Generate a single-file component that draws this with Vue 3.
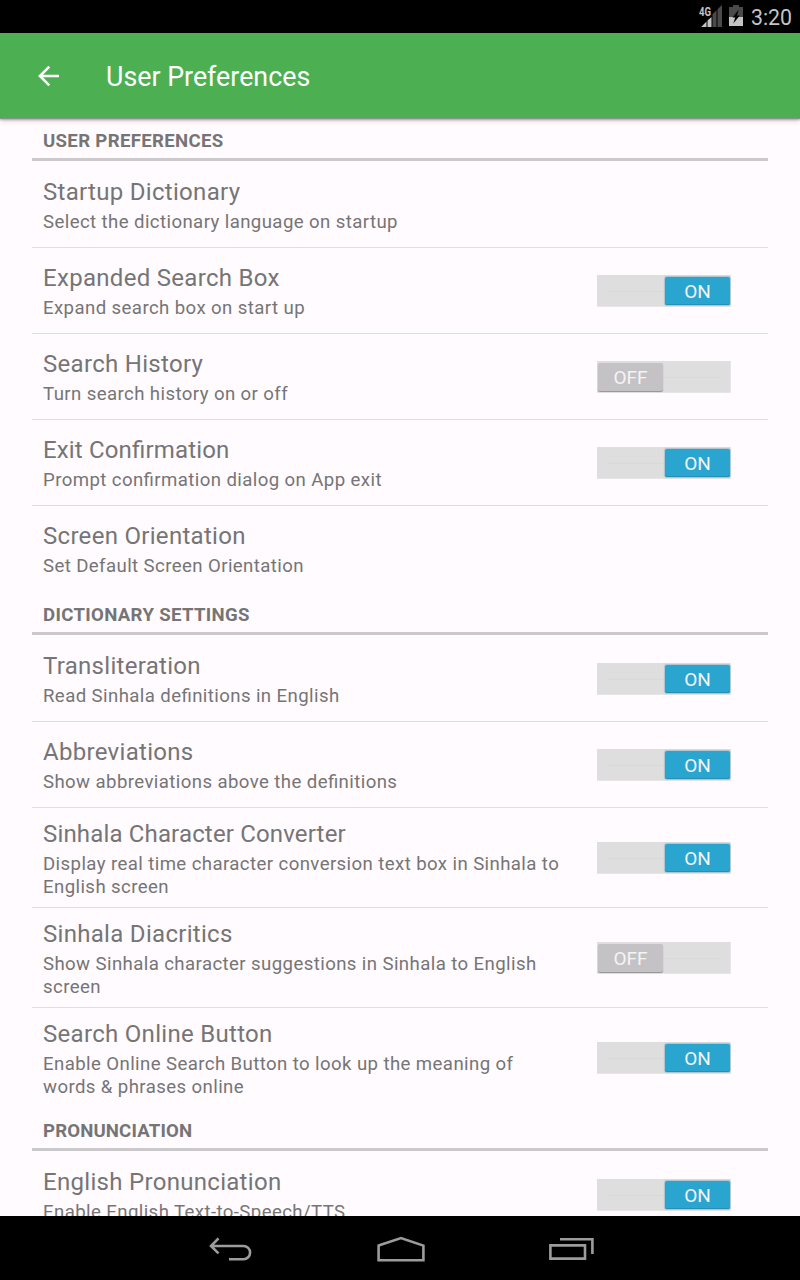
<script setup>
const sections = [
  {
    title: 'USER PREFERENCES',
    rows: [
      { title: 'Startup Dictionary', lines: ['Select the dictionary language on startup'] },
      { title: 'Expanded Search Box', lines: ['Expand search box on start up'], state: 'ON' },
      { title: 'Search History', lines: ['Turn search history on or off'], state: 'OFF' },
      { title: 'Exit Confirmation', lines: ['Prompt confirmation dialog on App exit'], state: 'ON' },
      { title: 'Screen Orientation', lines: ['Set Default Screen Orientation'] },
    ],
  },
  {
    title: 'DICTIONARY SETTINGS',
    rows: [
      { title: 'Transliteration', lines: ['Read Sinhala definitions in English'], state: 'ON' },
      { title: 'Abbreviations', lines: ['Show abbreviations above the definitions'], state: 'ON' },
      { title: 'Sinhala Character Converter', lines: ['Display real time character conversion text box in Sinhala to', 'English screen'], state: 'ON' },
      { title: 'Sinhala Diacritics', lines: ['Show Sinhala character suggestions in Sinhala to English', 'screen'], state: 'OFF' },
      { title: 'Search Online Button', lines: ['Enable Online Search Button to look up the meaning of', 'words & phrases online'], state: 'ON' },
    ],
  },
  {
    title: 'PRONUNCIATION',
    rows: [
      { title: 'English Pronunciation', lines: ['Enable English Text-to-Speech/TTS'], state: 'ON' },
    ],
  },
]
</script>

<template>
  <div class="screen">
    <div class="status">
      <svg class="signal" width="24" height="24" viewBox="0 0 24 24">
        <path d="M23 0V22H18.5V4.3ZM17.5 5.3V22H13.5V9.3Z" fill="#4a4a4a" />
        <path d="M12.5 12V22H8.5V15.5ZM7.5 16.5V22H2.2Z" fill="#c4c4c4" />
        <text x="0" y="11" font-size="13" font-weight="700" textLength="12" lengthAdjust="spacingAndGlyphs" fill="#c4c4c4">4G</text>
      </svg>
      <svg class="battery" width="14" height="22" viewBox="0 0 14 22">
        <path d="M4 0H10V2H14V12H0V2H4Z" fill="#4a4a4a" />
        <path d="M0 12H14V21H0Z" fill="#c4c4c4" />
        <path d="M9.8 4.5L3.5 12.5H6.2L4.3 18.5L10.8 10.6H8Z" fill="#000" />
      </svg>
      <span class="clock">3:20</span>
    </div>

    <header class="toolbar">
      <svg class="back" width="22" height="22" viewBox="0 0 22 22" fill="none" stroke="#fff" stroke-width="2.6">
        <path d="M21 11H2.5M11.3 1.6L1.9 11L11.3 20.4" />
      </svg>
      <h1>User Preferences</h1>
    </header>

    <main class="list">
      <section v-for="s in sections" :key="s.title">
        <h2><span>{{ s.title }}</span></h2>
        <div v-for="r in s.rows" :key="r.title" class="row" :class="{ tall: r.lines.length > 1 }">
          <div class="text">
            <div class="title" :class="{ tight: r.title.includes('Con') }"><span>{{ r.title }}</span></div>
            <div v-for="l in r.lines" :key="l" class="summary"><span>{{ l }}</span></div>
          </div>
          <div v-if="r.state" class="switch" :class="r.state.toLowerCase()">
            <div class="thumb">{{ r.state }}</div>
          </div>
        </div>
      </section>
    </main>

    <nav class="navbar">
      <svg width="44" height="24" viewBox="0 0 44 24" fill="none" stroke="#9c9c9c" stroke-width="2.6">
        <path d="M2 9H34.5A6.6 6.6 0 0 1 34.5 22.2H20M9.5 1.3L2 9L9.5 16.4" />
      </svg>
      <svg width="48" height="26" viewBox="0 0 48 26" fill="none" stroke="#9c9c9c" stroke-width="2.6">
        <path d="M1.6 9.6L24 2L46.4 9.6V24.2H1.6Z" />
      </svg>
      <svg width="46" height="24" viewBox="0 0 46 24" fill="none" stroke="#9c9c9c" stroke-width="2.6">
        <path d="M1.4 8.4H36V21.6H1.4ZM11 2.2H43.4V17" />
      </svg>
    </nav>
  </div>
</template>

<style>
body { background: #000; }
</style>

<style scoped>
.screen {
  width: 800px;
  height: 1280px;
  display: flex;
  flex-direction: column;
  overflow: hidden;
  background: #fffbff;
  font-family: Roboto, "Noto Sans", sans-serif;
  font-feature-settings: "liga" 1;
  color: #757575;
}
.status {
  flex: none;
  height: 33px;
  box-sizing: border-box;
  padding: 5px 8px 0 0;
  display: flex;
  justify-content: flex-end;
  align-items: flex-start;
  background: #000;
}
.signal { margin-right: 6px; }
.battery { margin-right: 8px; }
.clock {
  font-size: 21.3px;
  line-height: 25px;
  color: #c4c4c4;
}
.toolbar {
  flex: none;
  height: 85px;
  margin-bottom: 1px;
  box-sizing: border-box;
  display: flex;
  align-items: center;
  padding-left: 38px;
  background: #4caf52;
  box-shadow: 0 1px 0 #8b918b, 0 2px 2px rgba(0, 0, 0, .3), 0 4px 5px rgba(0, 0, 0, .1);
  z-index: 1;
}
h1 {
  margin: 2px 0 0 46px;
  font-size: 26.8px;
  font-weight: 400;
  line-height: 34px;
  color: #fff;
}
.list {
  flex: 1;
  min-height: 0;
  overflow: hidden;
  padding: 0 32px;
}
section { padding-top: 2px; }
section:first-child { padding-top: 0; }
h2 {
  margin: 0;
  height: 42px;
  box-sizing: border-box;
  padding: 10px 11px 0;
  border-bottom: 3px solid #cbc9cc;
  font-size: 18.6px;
  font-weight: 700;
  line-height: 24px;
  letter-spacing: .33px;
}
section:last-child h2 { letter-spacing: .15px; }
.row {
  height: 86px;
  box-sizing: border-box;
  padding: 12px 37px 0 11px;
  border-bottom: 1px solid #dfdbdf;
  display: flex;
  justify-content: space-between;
}
h2 + .row { height: 87px; padding-top: 13px; }
.row.tall { height: 100px; padding-top: 8px; }
.row:last-child { height: 85px; border-bottom: 0; }
.row.tall:last-child { height: 99px; }
h2 + .row:last-child { height: 87px; }
.title {
  font-size: 24px;
  line-height: 37px;
  letter-spacing: .3px;
  white-space: nowrap;
}
.title.tight { letter-spacing: .16px; }
.summary {
  font-size: 18.6px;
  line-height: 23px;
  letter-spacing: .41px;
  white-space: nowrap;
}
.switch {
  flex: none;
  width: 134px;
  height: 32px;
  box-sizing: border-box;
  margin-top: 15px;
  padding: 2px 0 1px 1px;
  background: linear-gradient(#d9d9d9, #d9d9d9) 50% 16px / 114px 1px no-repeat #dedede;
  border: 1px solid #e8e5e8;
  border-width: 0 1px 1px 0;
  display: flex;
}
.tall .switch { margin-top: 26px; }
.switch.on { justify-content: flex-end; }
.thumb {
  width: 65px;
  height: 28px;
  border-radius: 2px;
  text-align: center;
  font-size: 19px;
  line-height: 29px;
  color: #f4f4f4;
}
.on .thumb { background: #2aa5d0; box-shadow: 0 0 1px 1px rgba(70, 150, 180, .35), inset 0 -1px #2690b4; }
.off .thumb { background: #c5c2c6; box-shadow: 0 1px 1px #929292; }
.navbar {
  flex: none;
  height: 64px;
  box-sizing: border-box;
  padding: 2px 0 0 3px;
  display: flex;
  justify-content: center;
  gap: 124px;
  align-items: center;
  background: #000;
}
</style>
